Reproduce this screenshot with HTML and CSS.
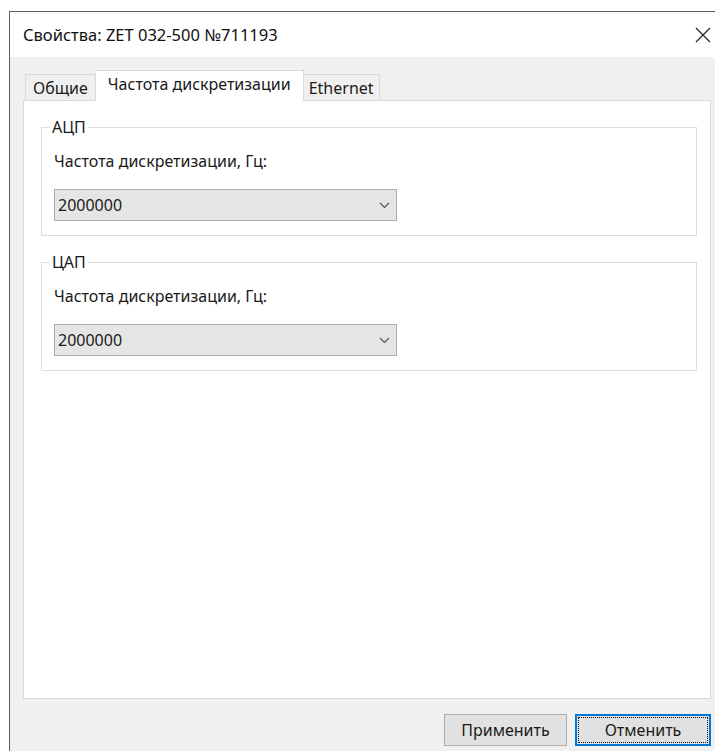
FILE: index.html
```html
<!DOCTYPE html>
<html lang="ru">
<head>
<meta charset="utf-8">
<title>Свойства: ZET 032-500 №711193</title>
<link rel="stylesheet" href="styles.css">
</head>
<body>
<div class="window">
  <div class="titlebar">
    <span class="title">Свойства: ZET 032-500 №711193</span>
    <svg class="close" width="16" height="16" viewBox="0 0 16 16" aria-label="Закрыть">
      <path d="M1 1 L15 15 M15 1 L1 15" stroke="#2b2b2b" stroke-width="1.3" fill="none"/>
    </svg>
  </div>
  <div class="client">
    <div class="tabs">
      <div class="tab">Общие</div>
      <div class="tab tab-active">Частота дискретизации</div>
      <div class="tab tab-narrow">Ethernet</div>
    </div>
    <div class="panel">
      <fieldset class="group">
        <legend>АЦП</legend>
        <div class="field-label">Частота дискретизации, Гц:</div>
        <div class="combo">
          <span class="combo-value">2000000</span>
          <svg class="chevron" width="11" height="7" viewBox="0 0 11 7"><path d="M1 1 L5.5 5.5 L10 1" stroke="#555" stroke-width="1.2" fill="none"/></svg>
        </div>
      </fieldset>
      <fieldset class="group">
        <legend>ЦАП</legend>
        <div class="field-label">Частота дискретизации, Гц:</div>
        <div class="combo">
          <span class="combo-value">2000000</span>
          <svg class="chevron" width="11" height="7" viewBox="0 0 11 7"><path d="M1 1 L5.5 5.5 L10 1" stroke="#555" stroke-width="1.2" fill="none"/></svg>
        </div>
      </fieldset>
    </div>
    <div class="buttons">
      <button class="btn btn-apply">Применить</button>
      <button class="btn btn-default">Отменить</button>
    </div>
  </div>
</div>
</body>
</html>
```
FILE: styles.css
```css
html, body {
  margin: 0;
  background: #ffffff;
  height: 100%;
  overflow: hidden;
}

body {
  font-family: "Noto Sans", "Open Sans", sans-serif;
  font-size: 16px;
  color: #1a1a1a;
}

/* dialog frame */
.window {
  margin: 11px 0 0 9px;
  height: 740px;
  box-sizing: border-box;
  border-top: 1px solid #5e5e5e;
  border-left: 1px solid #5e5e5e;
  display: flex;
  flex-direction: column;
}

.titlebar {
  height: 45px;
  flex: none;
  background: #ffffff;
  display: flex;
  align-items: center;
  padding-left: 13px;
}

.title {
  font-size: 16.5px;
  color: #111;
}

.close {
  margin-left: auto;
  margin-right: 4px;
}

.client {
  flex: 1;
  background: #f0f0f0;
  padding: 13px 4px 0 13px;
  display: flex;
  flex-direction: column;
}

/* tab strip */
.tabs {
  display: flex;
  align-items: flex-end;
  padding-left: 2px;
  height: 31px;
  margin-bottom: -1px;
  position: relative;
  z-index: 1;
}

.tab {
  box-sizing: border-box;
  height: 26px;
  margin-bottom: 1px;
  padding: 3px 7px 0;
  border: 1px solid #d9d9d9;
  border-bottom: none;
  background: #f0f0f0;
  line-height: 20px;
  white-space: nowrap;
}

.tab + .tab {
  border-left: none;
}

.tab-active {
  height: 31px;
  margin-bottom: 0;
  padding: 3px 12px 0;
  background: #ffffff;
  border-left: 1px solid #d9d9d9;
}

.tab-active + .tab {
  border-left: none;
}

.tab-narrow {
  padding: 3px 5px 0;
}

/* tab page */
.panel {
  box-sizing: border-box;
  height: 599px;
  flex: none;
  background: #ffffff;
  border: 1px solid #d9d9d9;
  padding-top: 16px;
  display: flex;
  flex-direction: column;
  gap: 16px;
}

.group {
  margin: 0 13px 0 17px;
  padding: 14px 12px 14px;
  border: 1px solid #dcdcdc;
  min-width: 0;
}

.group legend {
  margin-left: -4px;
  padding: 0 2px;
  line-height: 20px;
}

.field-label {
  line-height: 20px;
}

.combo {
  box-sizing: border-box;
  margin-top: 18px;
  width: 343px;
  height: 32px;
  background: #e5e5e5;
  border: 1px solid #adadad;
  display: flex;
  align-items: center;
  padding: 0 6px 0 3px;
}

.chevron {
  margin-left: auto;
}

/* dialog buttons */
.buttons {
  display: flex;
  justify-content: flex-end;
  gap: 8px;
  margin-top: 15px;
}

.btn {
  box-sizing: border-box;
  height: 32px;
  font: inherit;
  color: #1a1a1a;
  background: #e1e1e1;
  border: 1px solid #adadad;
  padding: 0;
  position: relative;
}

.btn-apply {
  width: 123px;
}

.btn-default {
  width: 136px;
  border: 2px solid #0078d7;
}

.btn-default::after {
  content: "";
  position: absolute;
  inset: 1px;
  border: 1px dotted #111;
}
```
